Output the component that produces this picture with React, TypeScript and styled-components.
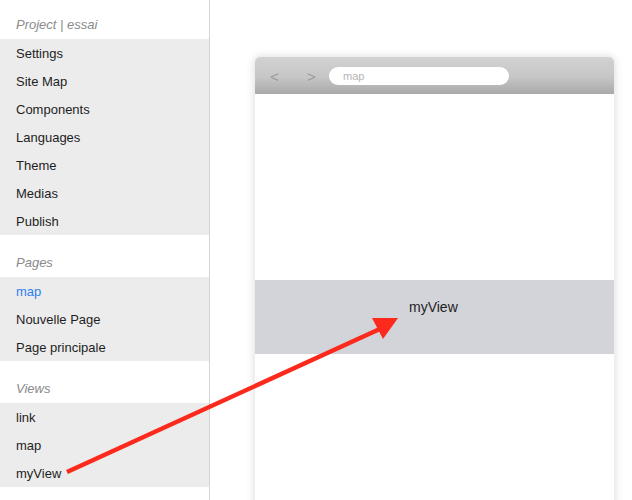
import React from "react";
import styled, { createGlobalStyle } from "styled-components";

const Global = createGlobalStyle`
  html, body { margin: 0; padding: 0; background: #fff; }
  body { font-family: "Liberation Sans", Arial, sans-serif; overflow: hidden; }
  * { box-sizing: border-box; }
`;

const Page = styled.div`
  position: relative;
  display: flex;
  width: 632px;
  height: 500px;
  overflow: hidden;
`;

const Sidebar = styled.nav`
  width: 210px;
  flex: none;
  border-right: 1px solid #d4d4d4;
  display: flex;
  flex-direction: column;
`;

const SectionTitle = styled.div<{ $first?: boolean }>`
  height: ${(p) => (p.$first ? 39 : 42)}px;
  display: flex;
  align-items: flex-end;
  padding: 0 16px 7px;
  font-size: 13px;
  line-height: 14px;
  font-style: italic;
  color: #8a8a8a;
`;

const Group = styled.ul`
  list-style: none;
  margin: 0;
  padding: 0;
  background: #ececec;
`;

const Item = styled.li<{ $active?: boolean }>`
  height: 28px;
  display: flex;
  align-items: center;
  padding: 0 16px;
  font-size: 13px;
  color: ${(p) => (p.$active ? "#2f7ff0" : "#1e1e1e")};
`;

const Main = styled.main`
  flex: 1;
  padding: 57px 18px 0 45px;
`;

const Browser = styled.div`
  width: 359px;
  height: 480px;
  border-radius: 5px 5px 0 0;
  background: #fff;
  box-shadow: 0 0 10px rgba(0, 0, 0, 0.16);
  display: flex;
  flex-direction: column;
  overflow: hidden;
`;

const Toolbar = styled.div`
  height: 37px;
  flex: none;
  display: flex;
  align-items: center;
  padding: 1px 0 0 15px;
  background: linear-gradient(#d2d2d2, #c6c6c6 55%, #a9a9a9);
`;

const NavBtn = styled.span<{ $w: number }>`
  width: ${(p) => p.$w}px;
  flex: none;
  font-size: 15px;
  color: #9a9a9a;
`;

const Url = styled.div`
  width: 180px;
  height: 18px;
  border-radius: 9px;
  background: #fff;
  display: flex;
  align-items: center;
  padding-left: 14px;
  font-size: 11px;
  color: #b4b4b4;
`;

const Spacer = styled.div`
  height: 186px;
  flex: none;
`;

const ViewBand = styled.div`
  height: 74px;
  flex: none;
  background: #d3d4d9;
  padding: 19px 0 0 154px;
  font-size: 14px;
  line-height: 16px;
  color: #1e1e1e;
`;

const Arrow = styled.svg`
  position: absolute;
  left: 0;
  top: 0;
  pointer-events: none;
`;

export default function App() {
  return (
    <Page>
      <Global />
      <Sidebar>
        <SectionTitle $first>Project | essai</SectionTitle>
        <Group>
          <Item>Settings</Item>
          <Item>Site Map</Item>
          <Item>Components</Item>
          <Item>Languages</Item>
          <Item>Theme</Item>
          <Item>Medias</Item>
          <Item>Publish</Item>
        </Group>
        <SectionTitle>Pages</SectionTitle>
        <Group>
          <Item $active>map</Item>
          <Item>Nouvelle Page</Item>
          <Item>Page principale</Item>
        </Group>
        <SectionTitle>Views</SectionTitle>
        <Group>
          <Item>link</Item>
          <Item>map</Item>
          <Item>myView</Item>
        </Group>
      </Sidebar>
      <Main>
        <Browser>
          <Toolbar>
            <NavBtn $w={37}>&lt;</NavBtn>
            <NavBtn $w={22}>&gt;</NavBtn>
            <Url>map</Url>
          </Toolbar>
          <Spacer />
          <ViewBand>myView</ViewBand>
        </Browser>
      </Main>
      <Arrow width="632" height="500" viewBox="0 0 632 500">
        <line x1="67" y1="472" x2="382" y2="328" stroke="#fb2a1c" strokeWidth="4.5" />
        <polygon points="398,318 372,318 383,339" fill="#fb2a1c" />
      </Arrow>
    </Page>
  );
}
